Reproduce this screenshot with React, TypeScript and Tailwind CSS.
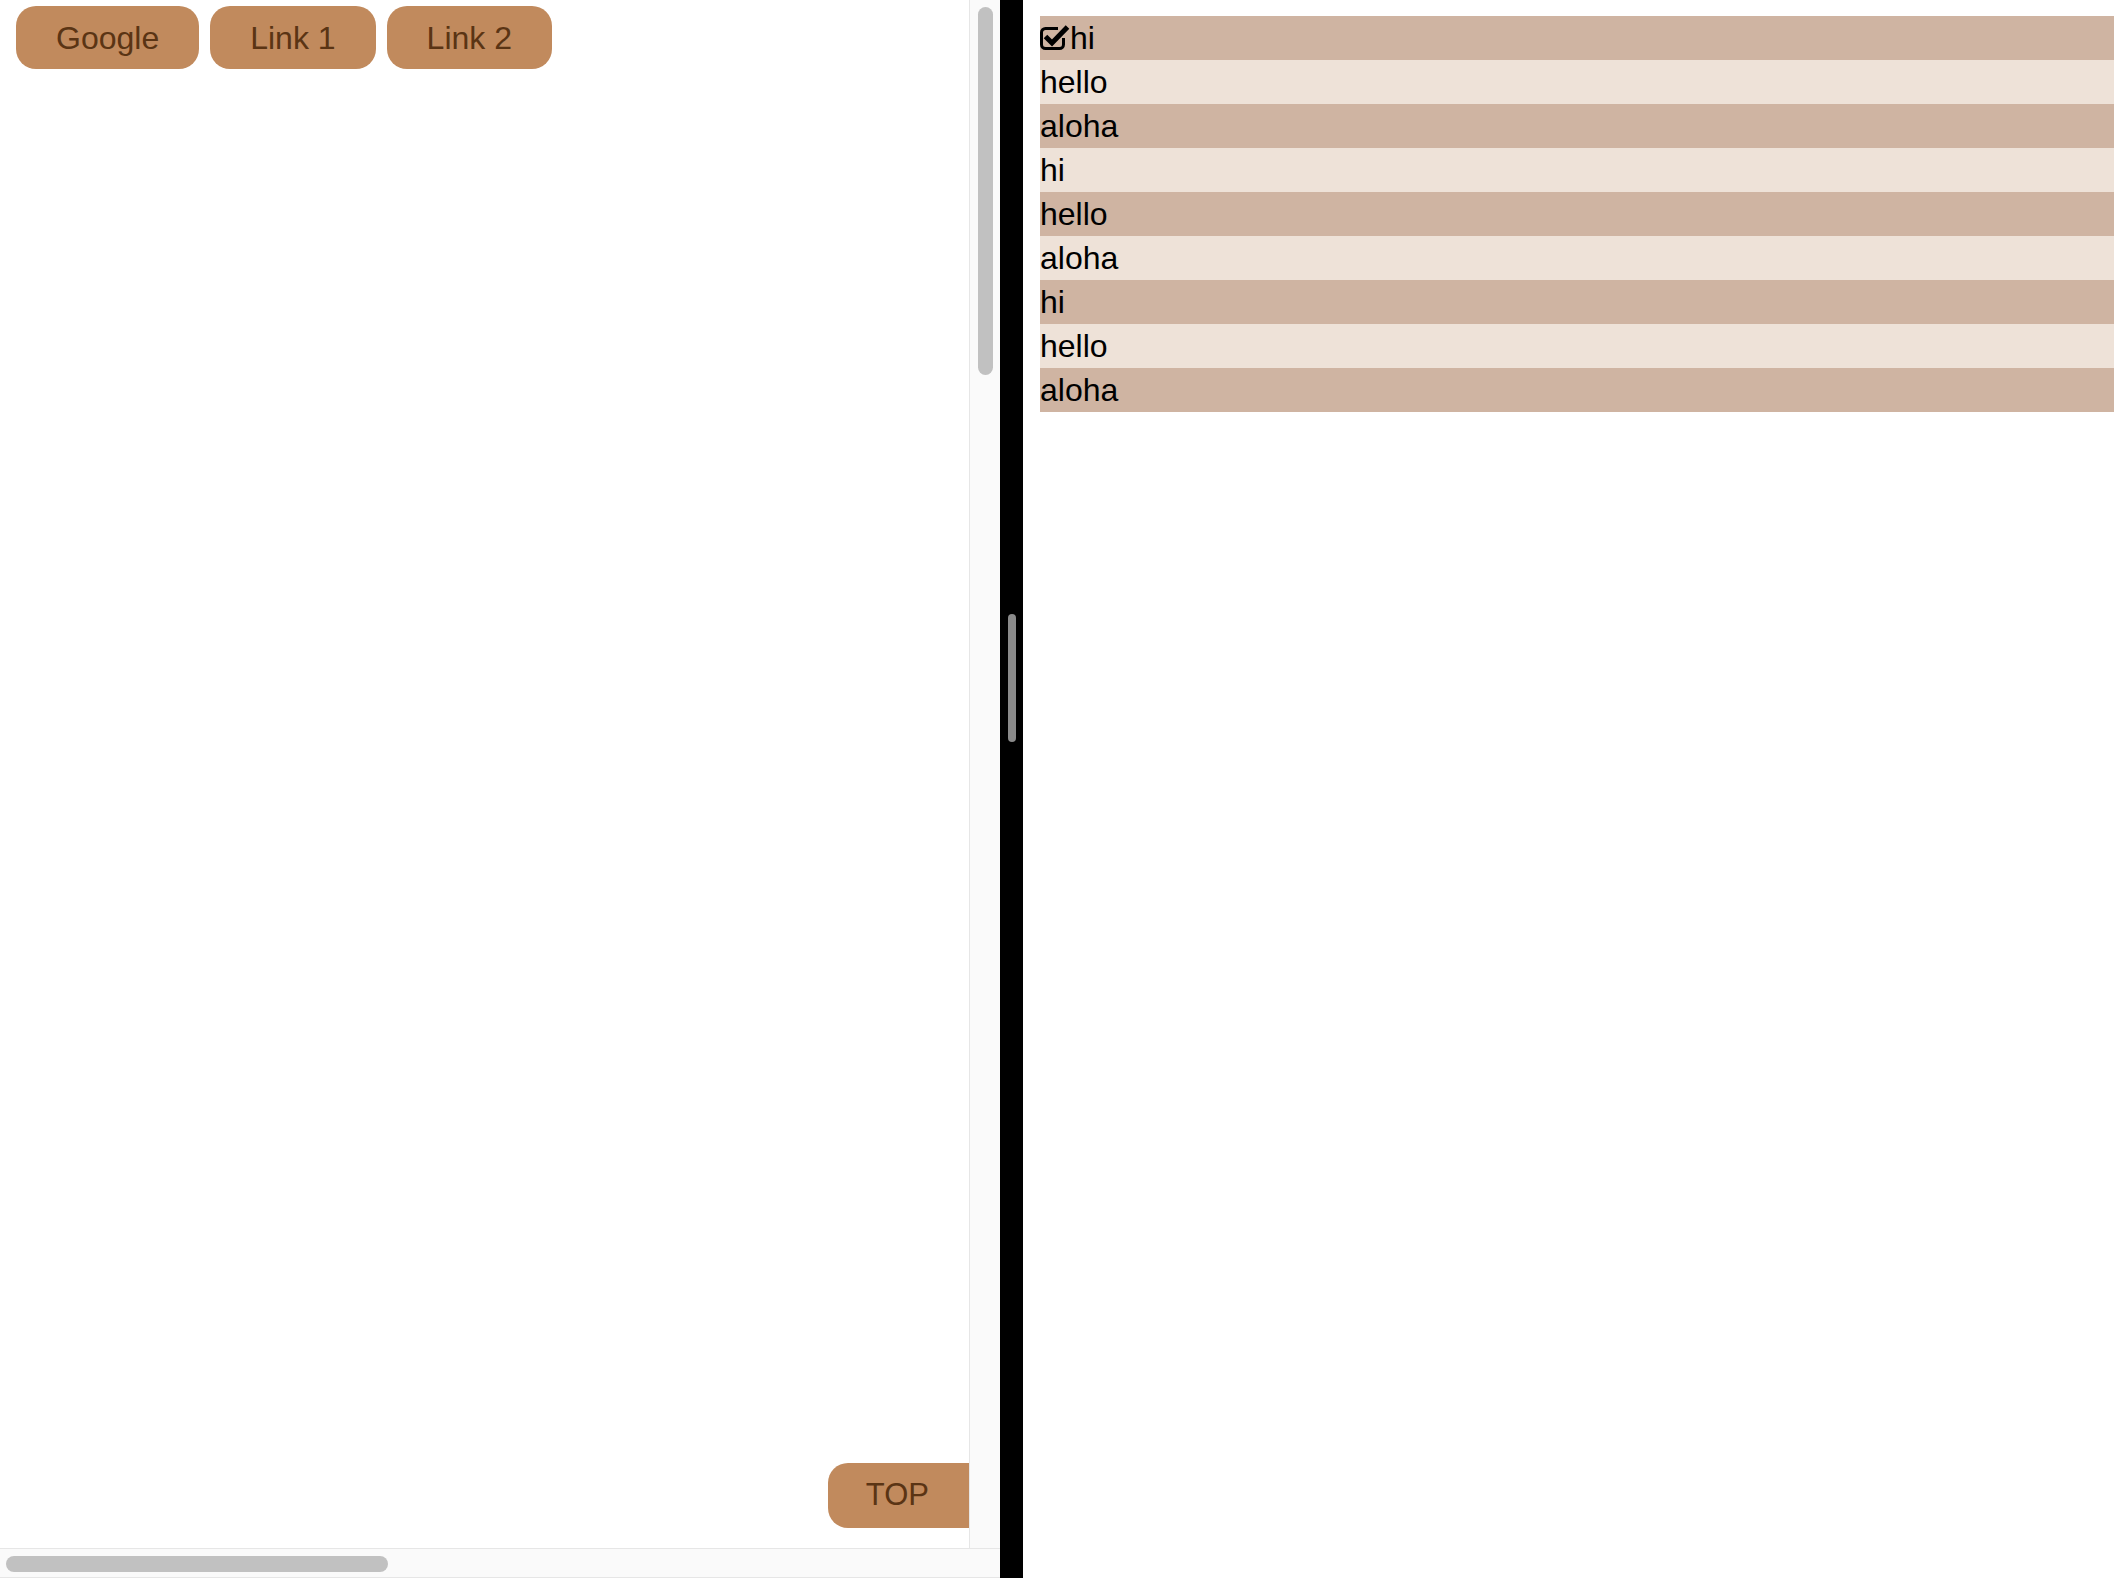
import React from "react";

const links = ["Google", "Link 1", "Link 2"];
const words = ["hi", "hello", "aloha", "hi", "hello", "aloha", "hi", "hello", "aloha"];

const CheckIcon = () => (
  <svg width="30" height="26" viewBox="0 0 30 26" className="shrink-0">
    <path
      d="M18 3.5 H5.5 a4 4 0 0 0 -4 4 V19.5 a4 4 0 0 0 4 4 H19.5 a4 4 0 0 0 4 -4 V13"
      fill="none"
      stroke="#000"
      strokeWidth="3"
    />
    <path d="M5.5 11.5 L12 18 L27.5 2" fill="none" stroke="#000" strokeWidth="5" />
  </svg>
);

const App = () => {
  return (
    <div className="flex h-[1578px] w-full overflow-hidden bg-white font-['Liberation_Sans',Arial,sans-serif]">
      {/* left frame */}
      <div className="flex w-[1000px] shrink-0 flex-col">
        <div className="flex flex-1">
          <div className="flex w-[970px] flex-col justify-between overflow-hidden border-r border-[#e6e6e6]">
            <div className="flex gap-[11px] pl-[16px] pt-[6px]">
              {links.map((l) => (
                <a
                  key={l}
                  href="#"
                  className="flex h-[63px] items-center rounded-[20px] bg-[#c18a5d] px-[40px] text-[32px] text-[#5a3414]"
                >
                  {l}
                </a>
              ))}
            </div>
            <div className="flex justify-end pb-[20px]">
              <button className="flex h-[65px] items-center rounded-l-[20px] bg-[#c18a5d] pl-[38px] pr-[40px] text-[31px] text-[#5a3414]">
                TOP
              </button>
            </div>
          </div>
          <div className="w-[30px] bg-[#fafafa] pl-[8px] pt-[7px]">
            <div className="h-[368px] w-[15px] rounded-full bg-[#c1c1c1]" />
          </div>
        </div>
        <div className="flex h-[30px] border-y border-[#e6e6e6] bg-[#fafafa]">
          <div className="w-[970px] pl-[6px] pt-[7px]">
            <div className="h-[16px] w-[382px] rounded-full bg-[#c1c1c1]" />
          </div>
        </div>
      </div>

      {/* divider */}
      <div className="flex w-[23px] shrink-0 flex-col items-center bg-black pt-[614px]">
        <div className="h-[128px] w-[8px] rounded-full bg-[#8a8a8a]" />
      </div>

      {/* right frame */}
      <div className="flex-1 pl-[17px] pt-[16px]">
        {words.map((w, i) => (
          <div
            key={i}
            className={`flex h-[44px] items-center text-[32px] leading-[44px] text-black ${
              i % 2 === 0 ? "bg-[#cfb4a2]" : "bg-[#eee2d8]"
            }`}
          >
            {i === 0 && <CheckIcon />}
            <span>{w}</span>
          </div>
        ))}
      </div>
    </div>
  );
};

export default App;
